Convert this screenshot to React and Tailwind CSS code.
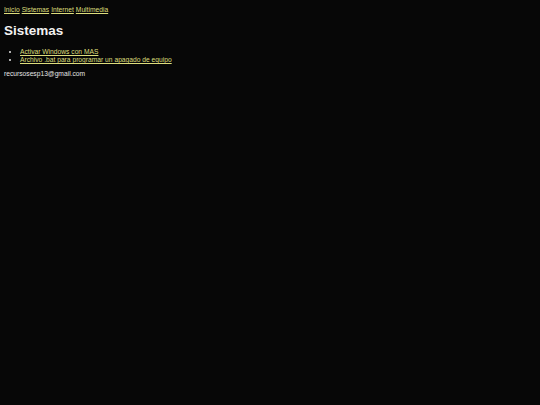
export default function App() {
  const links = ['Inicio', 'Sistemas', 'Internet', 'Multimedia'];
  return (
    <div className="min-h-[405px] bg-[#070707] text-[#e6e6e6] px-[4px] pt-[6px] text-[6.7px] leading-[8px]" style={{ fontFamily: '"Liberation Sans", Arial, sans-serif' }}>
      <nav className="flex gap-[2px]">
        {links.map((l) => (
          <a key={l} href="#" className="underline text-[#dede7c]">{l}</a>
        ))}
      </nav>
      <h1 className="text-[13.5px] leading-[16px] font-bold mt-[9px] mb-[9px] text-[#f2f2f2]">Sistemas</h1>
      <ul className="list-disc pl-[16px]">
        <li><a href="#" className="underline text-[#dede7c]">Activar Windows con MAS</a></li>
        <li><a href="#" className="underline text-[#dede7c]">Archivo .bat para programar un apagado de equipo</a></li>
      </ul>
      <p className="mt-[6px]">recursosesp13@gmail.com</p>
    </div>
  );
}
